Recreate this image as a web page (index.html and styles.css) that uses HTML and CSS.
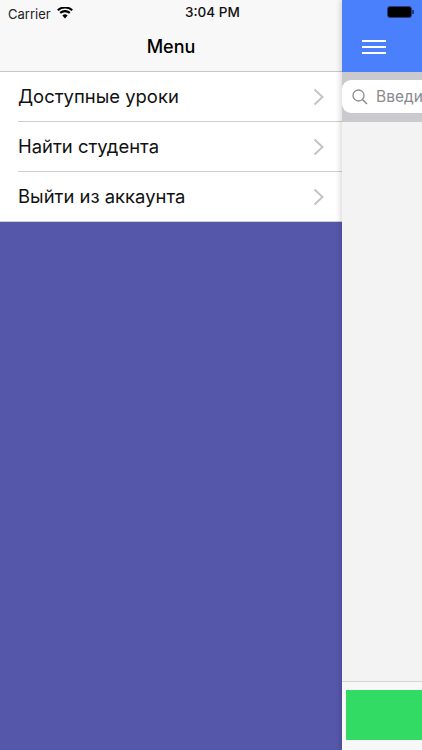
FILE: index.html
```html
<!DOCTYPE html>
<html lang="ru">
<head>
<meta charset="utf-8">
<title>Menu</title>
<link rel="stylesheet" href="styles.css">
</head>
<body>
<div class="app">
  <aside class="drawer">
    <header class="nav">
      <div class="status">
        <div class="carrier">
          <span>Carrier</span>
          <svg class="wifi" width="16" height="12" viewBox="0 0 16 12"><path d="M8 11.500 5.400 8.400a3.800 3.800 0 0 1 5.200 0zM3.900 6.700 2.500 5.100a8.300 8.300 0 0 1 11 0l-1.400 1.600a6.200 6.200 0 0 0-8.200 0zM1.500 4 .1 2.400a11.900 11.900 0 0 1 15.800 0L14.500 4a9.800 9.800 0 0 0-13 0z" fill="#000"/></svg>
        </div>
        <div class="time">3:04 PM</div>
      </div>
      <div class="nav-title">Menu</div>
    </header>
    <ul class="menu">
      <li class="item"><span>Доступные уроки</span><svg class="chev" width="12" height="18" viewBox="0 0 12 18"><path d="M2.500 1.500 10.500 9l-8 7.500" fill="none" stroke="#c4c4c7" stroke-width="2"/></svg></li>
      <li class="item"><span>Найти студента</span><svg class="chev" width="12" height="18" viewBox="0 0 12 18"><path d="M2.500 1.500 10.500 9l-8 7.500" fill="none" stroke="#c4c4c7" stroke-width="2"/></svg></li>
      <li class="item"><span>Выйти из аккаунта</span><svg class="chev" width="12" height="18" viewBox="0 0 12 18"><path d="M2.500 1.500 10.500 9l-8 7.500" fill="none" stroke="#c4c4c7" stroke-width="2"/></svg></li>
    </ul>
    <div class="fill"></div>
  </aside>
  <main class="page">
    <header class="bar">
      <div class="battery"><div class="battery-body"></div><div class="battery-tip"></div></div>
      <div class="burger"><i></i><i></i><i></i></div>
    </header>
    <div class="search">
      <div class="search-field">
        <svg width="16" height="16" viewBox="0 0 16 16"><circle cx="6.500" cy="6.500" r="5.500" fill="none" stroke="#8a8a8e" stroke-width="1.300"/><path d="M10.500 10.500 15 15" stroke="#8a8a8e" stroke-width="1.500"/></svg>
        <span>Введи</span>
      </div>
    </div>
    <div class="content"></div>
    <footer class="tabbar"><div class="green"></div></footer>
  </main>
</div>
</body>
</html>
```
FILE: styles.css
```css
* { box-sizing: border-box; }
html, body { margin: 0; padding: 0; }
body { width: 422px; height: 750px; overflow: hidden; font-family: Inter, "Liberation Sans", sans-serif; }
.app { display: grid; grid-template-columns: 342px 80px; height: 750px; }
.drawer { display: flex; flex-direction: column; height: 750px; background: #5557ab; }
.nav { height: 72px; background: #f8f8f8; border-bottom: 1px solid #c8c8c8; }
.status { display: flex; height: 24px; padding: 4px 0 0 8px; }
.carrier { display: flex; align-items: center; gap: 6px; width: 177px; font-size: 13px; line-height: 16px; color: #222; }
.wifi { margin-top: -2px; }
.time { font-size: 13.500px; line-height: 16px; font-weight: 500; color: #111; white-space: nowrap; }
.nav-title { text-align: center; font-size: 18px; line-height: 22px; font-weight: 500; color: #000; margin-top: 12px; }
.menu { list-style: none; margin: 0; padding: 0; background: #fff; }
.item { height: 50px; margin-left: 18px; padding: 0 18px 2px 0; display: flex; align-items: center; justify-content: space-between; border-bottom: 1px solid #cfcfcf; font-size: 18.450px; color: #111; }
.item:last-child { margin-left: 0; padding-left: 18px; }
.chev { margin-top: 2px; }
.fill { flex: 1; }
.page { display: flex; flex-direction: column; height: 750px; background: #f3f3f3; box-shadow: -2px 0 5px rgba(0,0,0,.14); position: relative; z-index: 1; }
.bar { height: 72px; background: #4a80fb; padding: 6px 0 0 20px; }
.battery { display: flex; align-items: center; margin-left: 25px; }
.battery-body { width: 25px; height: 12px; background: #000; border: 1px solid #1f3f86; border-radius: 3px; flex: none; }
.battery-tip { width: 2px; height: 4px; background: #1f3f86; flex: none; }
.burger { display: flex; flex-direction: column; gap: 4px; margin-top: 22px; }
.burger i { display: block; width: 24px; height: 2px; background: #fff; }
.search { height: 50px; background: #c9c9ce; padding-top: 8px; }
.search-field { display: flex; align-items: center; gap: 8px; width: 80px; height: 33px; padding-left: 10px; background: #fff; border-radius: 9px 0 0 9px; font-size: 15.500px; color: #8a8a8e; white-space: nowrap; }
.search-field svg { flex: none; }
.content { flex: 1; }
.tabbar { height: 69px; background: #f8f8f8; border-top: 1px solid #d4d4d4; padding: 8px 0 0 4px; }
.green { width: 76px; height: 50px; background: #32dc64; }
```
